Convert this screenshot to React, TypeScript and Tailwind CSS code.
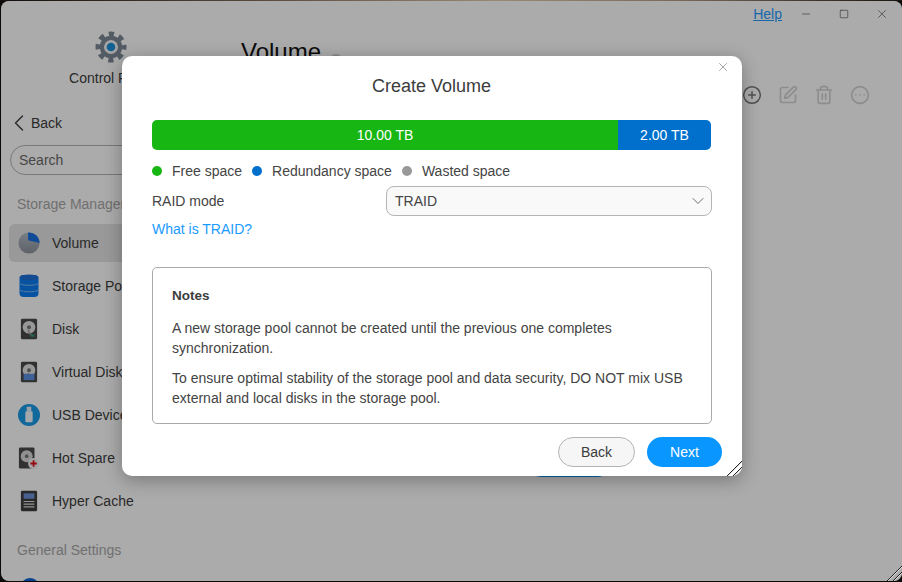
import { CirclePlus, SquarePen, Trash2, CircleEllipsis, ChevronLeft, ChevronDown, Minus, Square, X } from "lucide-react";
import type { ReactNode } from "react";

const PieIcon = () => (
  <svg width="22" height="22" viewBox="0 0 24 24">
    <defs>
      <linearGradient id="pie" x1="0" y1="0" x2="0" y2="1">
        <stop offset="0" stopColor="#b4bcc8" />
        <stop offset="1" stopColor="#8d929c" />
      </linearGradient>
    </defs>
    <circle cx="12" cy="12" r="11.5" fill="url(#pie)" />
    <path d="M11 0.5A11.5 11.5 0 0 1 23.5 12L11 9Z" fill="#1a6fe0" />
  </svg>
);

const PoolIcon = () => (
  <svg width="20" height="24" viewBox="0 0 20 24">
    <rect x="0.5" y="1" width="19" height="22" rx="4" fill="#0b7df0" />
    <ellipse cx="10" cy="3.4" rx="9.5" ry="3" fill="#1f6fd6" />
    <path d="M0.5 9.5c3 2.4 16 2.4 19 0M0.5 16c3 2.4 16 2.4 19 0" stroke="#7fb6f2" strokeWidth="1" fill="none" />
  </svg>
);

const DiskBase = ({ children }: { children?: ReactNode }) => (
  <svg width="18" height="24" viewBox="0 0 20 24">
    <rect x="1" y="0.5" width="18" height="23" rx="1.5" fill="#4a4a4a" />
    <circle cx="10" cy="10" r="7" fill="#e2e2e2" />
    <circle cx="10" cy="10" r="2.2" fill="#777" />
    <path d="M12 19l-3-6" stroke="#999" strokeWidth="1.6" />
    {children}
  </svg>
);

const UsbIcon = () => (
  <svg width="22" height="22" viewBox="0 0 24 24">
    <circle cx="12" cy="12" r="12" fill="#1a9be8" />
    <rect x="9.5" y="3" width="5" height="5" fill="#e8f4fc" />
    <rect x="8" y="8" width="8" height="12" rx="1.5" fill="#f5fbff" />
  </svg>
);

const SpareIcon = () => (
  <svg width="22" height="24" viewBox="0 0 24 24">
    <rect x="1" y="0.5" width="17" height="23" rx="1.5" fill="#4a4a4a" />
    <circle cx="9.5" cy="10" r="6.5" fill="#d8d8d8" />
    <circle cx="9.5" cy="10" r="2" fill="#777" />
    <circle cx="17" cy="18" r="6" fill="#f4f4f4" />
    <path d="M17 14.5v7M13.5 18h7" stroke="#e0101c" strokeWidth="2" />
  </svg>
);

const CacheIcon = () => (
  <svg width="18" height="24" viewBox="0 0 20 24">
    <rect x="1" y="0.5" width="18" height="23" rx="1.5" fill="#3d3d3d" />
    <rect x="4" y="3.5" width="12" height="6" fill="#6f8fd8" />
    <path d="M4 12.5h12M4 15.5h12M4 18.5h12" stroke="#dddddd" strokeWidth="1.2" />
  </svg>
);

const Grip = () => (
  <svg width="16" height="16" viewBox="0 0 16 16" className="absolute right-0 bottom-0">
    <path d="M1 16L16 1M7 16L16 7" stroke="#222" strokeWidth="1" fill="none" />
    <path d="M2 16L16 2M8 16L16 8" stroke="#ddd" strokeWidth="1" fill="none" />
  </svg>
);

const navItems: { label: string; icon: ReactNode; active?: boolean }[] = [
  { label: "Volume", icon: <PieIcon />, active: true },
  { label: "Storage Pool", icon: <PoolIcon /> },
  { label: "Disk", icon: <DiskBase><rect x="12" y="18" width="4" height="2.5" fill="#2ea36a" /></DiskBase> },
  { label: "Virtual Disk", icon: <DiskBase><rect x="4" y="14" width="12" height="7" fill="#5c8fe0" /></DiskBase> },
  { label: "USB Device", icon: <UsbIcon /> },
  { label: "Hot Spare", icon: <SpareIcon /> },
  { label: "Hyper Cache", icon: <CacheIcon /> },
];

export default function App() {
  return (
    <div
      className="w-[902px] h-[582px] overflow-hidden bg-[#0c0a08] text-[14px] text-[#3c3c3c]"
      style={{ fontFamily: '"Liberation Sans", Arial, sans-serif' }}
    >
      {/* strip of wallpaper above the window */}
      <div className="h-px bg-[linear-gradient(90deg,#120e0b,#5c4c3e_30%,#9a8876_55%,#7b6a5a_75%,#1a1511)]" />

      <div className="relative ml-px h-[580px] w-[901px] flex overflow-hidden rounded-[8px] bg-white">
        <aside className="w-[229px] shrink-0 flex flex-col pl-[8px] overflow-hidden">
          <div className="mt-[30px] shrink-0 flex justify-center pr-[18px]">
            <svg width="32" height="32" viewBox="0 0 32 32">
              <circle cx="16" cy="16" r="13" fill="none" stroke="#7d8895" strokeWidth="5" strokeDasharray="5.2 5.01" strokeDashoffset="2.6" />
              <circle cx="16" cy="16" r="9" fill="none" stroke="#7d8895" strokeWidth="4.5" />
              <circle cx="16" cy="16" r="6.8" fill="#f4f4f4" />
              <circle cx="16" cy="16" r="4.3" fill="#1a8fd8" />
            </svg>
          </div>
          <div className="mt-[5px] shrink-0 leading-[20px] text-center pr-[16px]">Control Panel</div>
          <div className="mt-[25px] shrink-0 flex items-center h-[20px]">
            <ChevronLeft size={28} strokeWidth={1.2} className="-ml-[4px] -mr-[2px] text-[#3c3c3c]" />
            <span>Back</span>
          </div>
          <div className="mt-[12px] shrink-0 ml-[1px] w-[205px] h-[30px] rounded-full border border-[#b4b4b4] flex items-center pl-[8px] text-[#6a6a6a]">
            Search
          </div>
          <div className="mt-[19px] shrink-0 pl-[8px] leading-[20px] text-[#a8a8a8]">Storage Manager</div>
          <nav className="mt-[10px] shrink-0 flex flex-col gap-[5px]">
            {navItems.map((item) => (
              <div
                key={item.label}
                className={`h-[38px] mr-[8px] rounded-[6px] flex items-center ${item.active ? "bg-[#e4e4e4]" : ""}`}
              >
                <span className="w-[40px] flex justify-center">{item.icon}</span>
                <span className="ml-[3px]">{item.label}</span>
              </div>
            ))}
          </nav>
          <div className="mt-[20px] shrink-0 pl-[8px] leading-[20px] text-[#a8a8a8]">General Settings</div>
          <div className="mt-[18px] ml-[11px] w-[20px] h-[20px] shrink-0 rounded-full bg-[#0b63d8]" />
        </aside>

        <main className="flex-1 flex flex-col pl-[11px]">
          <div className="h-[26px] flex items-center justify-end">
            <a className="underline text-[#1f9bff] mr-[4px]">Help</a>
            <span className="w-[40px] flex justify-center"><Minus size={12} strokeWidth={1.2} /></span>
            <span className="w-[36px] flex justify-center"><Square size={10} strokeWidth={1.4} /></span>
            <span className="w-[40px] flex justify-center"><X size={14} strokeWidth={1} /></span>
          </div>
          <div className="mt-[13px] flex items-start">
            <h1 className="text-[24px] leading-[24px] text-[#111]">Volume</h1>
            <span className="mt-[14px] ml-[8px] w-[14px] h-[14px] rounded-full bg-[#d0d0d0]" />
          </div>
          <div className="mt-[17px] flex items-center justify-end gap-[16px] pr-[32px] h-[20px]">
            <CirclePlus size={20} strokeWidth={1.8} className="text-[#777]" />
            <SquarePen size={20} strokeWidth={2} className="text-[#d2d2d2]" />
            <Trash2 size={20} strokeWidth={2} className="text-[#d2d2d2]" />
            <CircleEllipsis size={20} strokeWidth={2} className="text-[#d2d2d2]" />
          </div>
          <div className="mt-[342px] ml-[285px] w-[87px] h-[30px] rounded-full bg-[#0a96ff]" />
        </main>

        {/* dimming layer over the window */}
        <div className="absolute inset-0 bg-[rgba(0,0,0,0.33)]" />
        <Grip />

        {/* dialog */}
        <div className="absolute left-[121px] top-[55px] w-[620px] h-[420px] rounded-[10px] bg-white shadow-[0_4px_18px_rgba(0,0,0,0.3)] flex flex-col text-[#444]">
          <X size={14} strokeWidth={1} className="absolute right-[12px] top-[4px] text-[#666]" />
          <h2 className="mt-[18px] text-center text-[18px] leading-[24px] text-[#3c3c3c] pr-[1px]">Create Volume</h2>

          <div className="mt-[22px] ml-[30px] mr-[31px] h-[30px] flex rounded-[5px] overflow-hidden text-white">
            <div className="w-[466px] bg-[#18b612] flex items-center justify-center">10.00 TB</div>
            <div className="flex-1 bg-[#0070cc] flex items-center justify-center">2.00 TB</div>
          </div>

          <div className="mt-[11px] ml-[30px] flex items-center h-[20px]">
            <span className="w-[10px] h-[10px] rounded-full bg-[#18b612] mr-[10px]" />
            <span className="mr-[10px]">Free space</span>
            <span className="w-[10px] h-[10px] rounded-full bg-[#0070cc] mr-[10px]" />
            <span className="mr-[10px]">Redundancy space</span>
            <span className="w-[10px] h-[10px] rounded-full bg-[#999] mr-[10px]" />
            <span>Wasted space</span>
          </div>

          <div className="mt-[5px] ml-[30px] mr-[30px] flex items-center">
            <span className="w-[234px]">RAID mode</span>
            <div className="flex-1 h-[30px] rounded-[8px] border border-[#b5b5b5] bg-[#f9f9f9] flex items-center justify-between pl-[8px] pr-[3px]">
              <span>TRAID</span>
              <ChevronDown size={20} strokeWidth={1} className="text-[#555]" />
            </div>
          </div>

          <a className="mt-[3px] ml-[30px] leading-[20px] text-[#1a9bff]">What is TRAID?</a>

          <section className="mt-[28px] mx-[30px] h-[157px] rounded-[5px] border border-[#aaa] px-[19px] pt-[18px]">
            <h3 className="font-bold leading-[20px] text-[#3c3c3c] text-[13.5px]">Notes</h3>
            <p className="mt-[12px] leading-[20px]">
              A new storage pool cannot be created until the previous one completes synchronization.
            </p>
            <p className="mt-[10px] leading-[20px]">
              To ensure optimal stability of the storage pool and data security, DO NOT mix USB external and local disks in the storage pool.
            </p>
          </section>

          <div className="mt-[13px] mr-[20px] flex justify-end gap-[12px]">
            <button className="w-[77px] h-[30px] rounded-full border border-[#b3b3b3] bg-[#f6f6f6] text-[#3c3c3c]">Back</button>
            <button className="w-[75px] h-[30px] rounded-full bg-[#0a96ff] text-white">Next</button>
          </div>
          <Grip />
        </div>
      </div>
    </div>
  );
}
